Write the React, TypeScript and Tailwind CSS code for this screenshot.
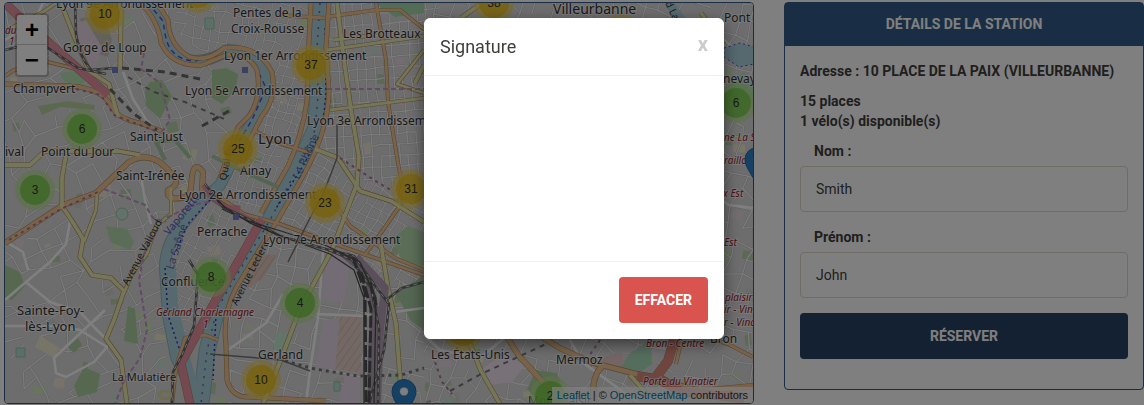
import React from "react";

type Point = [number, number];

function randomizer(seed: number) {
  let s = seed;
  return () => {
    s = (s * 16807) % 2147483647;
    return s / 2147483647;
  };
}

/* Builds an irregular network of small streets, rotated around its centre. */
function streets(cx: number, cy: number, w: number, h: number, cw: number, ch: number, angle: number, jitter: number, skip: number, seed: number) {
  const rnd = randomizer(seed);
  const cols = Math.ceil(w / cw);
  const rows = Math.ceil(h / ch);
  const a = (angle * Math.PI) / 180;
  const nodes: Point[][] = [];
  for (let r = 0; r <= rows; r++) {
    nodes.push([]);
    for (let c = 0; c <= cols; c++) {
      const x = -w / 2 + c * cw + (rnd() - 0.5) * jitter;
      const y = -h / 2 + r * ch + (rnd() - 0.5) * jitter;
      nodes[r].push([cx + x * Math.cos(a) - y * Math.sin(a), cy + x * Math.sin(a) + y * Math.cos(a)]);
    }
  }
  let d = "";
  const edge = (p: Point, q: Point) => {
    d += `M${p[0].toFixed(1)} ${p[1].toFixed(1)}L${q[0].toFixed(1)} ${q[1].toFixed(1)}`;
  };
  for (let r = 0; r <= rows; r++) {
    for (let c = 0; c <= cols; c++) {
      if (c < cols && rnd() > skip) edge(nodes[r][c], nodes[r][c + 1]);
      if (r < rows && rnd() > skip) edge(nodes[r][c], nodes[r + 1][c]);
    }
  }
  return d;
}

/* Scatters small land-use plots over the map. */
function plots(count: number, seed: number) {
  const rnd = randomizer(seed);
  const fills = ["#cdebb0", "#f0efc8", "#c6e3cf", "#f3e9d8", "#d4cfc8", "#eadbe6", "#add19e"];
  return Array.from({ length: count }, () => {
    const x = 5 + rnd() * 750;
    const y = 3 + rnd() * 400;
    const w = 4 + rnd() * 9;
    const h = 4 + rnd() * 8;
    const k = rnd() * 6 - 3;
    return {
      d: `M${x.toFixed(1)} ${y.toFixed(1)}l${w.toFixed(1)} ${k.toFixed(1)}l${(-k).toFixed(1)} ${h.toFixed(1)}l${(-w).toFixed(1)} ${(-k).toFixed(1)}z`,
      fill: fills[Math.floor(rnd() * fills.length)],
    };
  });
}

const districts = [
  { id: "west", area: "M5 3H140L170 62L222 66L256 70L250 120L205 190L165 240V404H5Z", d: streets(110, 210, 300, 460, 19, 17, -24, 13, 0.36, 71), w: 1.3 },
  { id: "north", area: "M158 3H310L306 100L262 70L240 50L195 56Z", d: streets(235, 50, 180, 150, 9, 10, 12, 4, 0.2, 15), w: 1.1 },
  { id: "center", area: "M270 75L308 100L300 145L262 215L205 195L250 140Z", d: streets(260, 150, 150, 160, 8, 9, 18, 3, 0.18, 33), w: 1.1 },
  { id: "east", area: "M330 3H440V200L345 175L322 150Z", d: streets(380, 95, 150, 230, 9, 11, -4, 2, 0.15, 44), w: 1.3 },
  { id: "south", area: "M322 150L345 175L440 200V300L270 230L285 200Z", d: streets(355, 215, 210, 170, 9, 10, 29, 3, 0.15, 92), w: 1.2 },
  { id: "confluence", area: "M200 200L262 225L185 355L172 320L172 260Z", d: streets(210, 260, 110, 170, 9, 10, 27, 3, 0.3, 12), w: 1.1 },
  { id: "gerland", area: "M268 235L424 290V404H228V310Z", d: streets(325, 320, 220, 210, 17, 15, 14, 8, 0.27, 6), w: 1.4 },
  { id: "suburbs", area: "M424 3H760V404H424Z", d: streets(590, 205, 420, 480, 15, 16, 20, 9, 0.24, 53), w: 1.3 },
];

const landUse = plots(210, 99);

const areas = [
  { fill: "#add19e", d: "M150 82L162 80L172 96L160 119L146 106L145 90Z" },
  { fill: "#add19e", d: "M212 70L226 68L238 74L236 90L222 104L212 98Z" },
  { fill: "#b5dcae", d: "M106 226L127 229L134 242L130 250L110 242Z" },
  { fill: "#add19e", d: "M128 306L135 309L138 344L124 341Z" },
  { fill: "#add19e", d: "M84 367L100 374L97 392L78 397L74 386Z" },
  { fill: "#add19e", d: "M5 265L20 272L25 286L12 300L5 298Z" },
  { fill: "#b8d3a0", d: "M38 106L68 101L95 105L94 110L60 107L42 115Z" },
  { fill: "#b7e2b5", d: "M60 73L74 71L86 79L81 88L64 81Z" },
  { fill: "#add19e", d: "M68 347L78 338L82 345L74 353Z" },
  { fill: "#eeead0", d: "M40 336L60 348L54 358L35 347Z" },
  { fill: "#c5c3b5", d: "M80 18L104 16L112 39L108 57L85 49Z" },
  { fill: "#ead9e7", d: "M68 26L86 20L102 48L95 67L80 59Z" },
  { fill: "#b5dcae", d: "M392 239L408 226L424 232V266L403 262Z" },
  { fill: "#a9cfa4", d: "M396 294L424 275V330L411 321Z" },
  { fill: "#a5d8ad", d: "M375 3H424V13L395 17Z" },
  { fill: "#e9d8ea", d: "M328 253L351 254L344 303L321 299Z" },
  { fill: "#e8d8e8", d: "M323 320L339 318L335 370L316 367Z" },
  { fill: "#e9d1cb", d: "M340 316H361V373L335 369Z" },
  { fill: "#e3cabd", d: "M255 254L277 255L263 278L247 289Z" },
  { fill: "#e9d8ea", d: "M345 375L360 377V404H339Z" },
  { fill: "#c5ead2", d: "M275 332L293 335L288 353L274 349Z" },
  { fill: "#a9dbbb", d: "M630 353L651 340L652 364L637 374L620 367Z" },
  { fill: "#add19e", d: "M536 370L557 373L566 400L541 403L527 389Z" },
  { fill: "#eac9ca", d: "M606 356L621 353L625 364L608 370L600 364Z" },
  { fill: "#f0e5f1", d: "M480 370L505 354L525 365L512 382L490 385Z" },
  { fill: "#b4e0bf", d: "M728 82L744 72L753 83V104L728 96Z" },
];

const roads = [
  { c: "#f0c795", w: 5, d: "M5 84L70 86Q102 88 112 107Q118 119 140 123L164 132" },
  { c: "#f0c795", w: 4, d: "M48 62L72 68L98 74M5 76L14 70L32 67" },
  { c: "#f0c795", w: 5, d: "M140 3Q158 19 161 43Q172 67 202 65L226 55Q248 52 257 70Q262 98 249 116L238 127L230 150L220 178" },
  { c: "#f0c795", w: 5, d: "M157 3L168 20Q169 46 190 57Q208 62 224 48Q258 44 272 72Q277 98 262 116L250 139L242 164" },
  { c: "#f0c795", w: 6, d: "M5 243L63 205L96 193L129 162Q151 149 170 172Q183 184 168 190Q165 203 190 196L192 177Q194 160 203 172L202 190L211 195" },
  { c: "#f0c795", w: 5, d: "M311 3L308 60L307 101Q302 136 288 166L261 213" },
  { c: "#f0c795", w: 5, d: "M329 3L326 48L329 91Q328 132 303 176L277 221L236 288Q222 315 226 345L227 380Q232 398 250 397L326 401" },
  { c: "#f0c795", w: 4, d: "M326 17L376 10H400L425 30" },
  { c: "#f0c795", w: 4, d: "M376 3L386 60L388 102L397 157L402 185L399 207L383 230L364 256" },
  { c: "#f0c795", w: 4, d: "M328 193L350 226L370 240L395 258L424 270M278 15L325 18M255 131L281 144L311 153" },
  { c: "#f0c795", w: 4, d: "M206 188L244 214L280 224L329 242L424 275M218 340L205 335L185 338L176 368L172 404" },
  { c: "#eaeab0", w: 5, d: "M5 165H30L45 151H75L118 151L140 155" },
  { c: "#eaeab0", w: 5, d: "M67 149L62 178V206Q75 225 83 239L80 257L92 275L111 278L124 291L114 320L106 339L121 360L127 404" },
  { c: "#eaeab0", w: 4, d: "M97 193L96 210L84 242M171 188V214L156 226L147 254L132 274L124 293M5 31L43 12L56 3" },
  { c: "#eaeab0", w: 5, d: "M61 3L74 36L89 71L109 84L118 117M121 10L120 69" },
  { c: "#eaeab0", w: 5, d: "M337 3L344 60L351 110L359 157L357 184L332 250L300 309L276 372L263 404" },
  { c: "#eaeab0", w: 4, d: "M327 50L425 36M330 110L425 98M333 40L375 35M424 50L397 84L424 93" },
  { c: "#eaeab0", w: 5, d: "M315 149L338 158L360 191L391 201L424 222M381 245L388 288L396 324L402 404" },
  { c: "#eaeab0", w: 5, d: "M464 329L481 371L500 404M415 83L424 65M482 3L461 18M630 375L646 393M701 13L724 45" },
  { c: "#f0c795", w: 6, d: "M502 329L519 356L544 383L562 404M537 334L560 348L590 362L640 375L700 391L753 386M604 365Q590 375 594 404" },
  { c: "#f0c795", w: 4, d: "M711 338L730 345L753 357M666 329L681 342L676 364" },
  { c: "#e892a2", w: 9, d: "M5 3L28 25L48 42L108 95M262 219L242 255L214 303L181 363L190 404" },
  { c: "#e892a2", w: 6, d: "M203 185L214 199L226 207L240 209M233 210L254 222" },
  { c: "#e18a80", w: 10, d: "M674 340L668 361L656 377M637 376L661 380L681 391L744 398" },
];

const rails = [
  "M75 3L76 34Q79 56 91 70L114 68",
  "M5 50L26 45L48 48L78 68L106 74",
  "M205 184L223 207L248 219L280 236L329 250L352 260L371 288L379 328L378 404",
  "M329 250L354 256L376 287L389 304L384 350L369 404",
  "M189 260L198 275L194 326L182 355L173 372L172 404",
  "M386 300L402 288L424 282L446 270",
];

const labels = [
  { x: 56, y: 8, s: 12, t: "Lyon 9e Arrondissement" },
  { x: 63, y: 52, s: 12, t: "Gorge de Loup" },
  { x: 13, y: 93, s: 12, t: "Champvert" },
  { x: 233, y: 17, s: 12, t: "Pentes de la" },
  { x: 231, y: 33, s: 12, t: "Croix-Rousse" },
  { x: 224, y: 60, s: 12, t: "Lyon 1er Arrondissement" },
  { x: 343, y: 38, s: 12, t: "Les Brotteaux" },
  { x: 185, y: 95, s: 12, t: "Lyon 5e Arrondissement" },
  { x: 307, y: 125, s: 12, t: "Lyon 3e Arrondissement" },
  { x: 130, y: 141, s: 12, t: "Saint-Just" },
  { x: 258, y: 144, s: 15, t: "Lyon" },
  { x: 5, y: 156, s: 12, t: "ival" },
  { x: 41, y: 156, s: 12, t: "Point du Jour" },
  { x: 116, y: 180, s: 12, t: "Saint-Irénée" },
  { x: 240, y: 175, s: 12, t: "Ainay" },
  { x: 179, y: 199, s: 12, t: "Lyon 2e Arrondissement" },
  { x: 197, y: 236, s: 12, t: "Perrache" },
  { x: 263, y: 244, s: 12, t: "Lyon 7e Arrondissement" },
  { x: 161, y: 286, s: 12, t: "Confluence" },
  { x: 17, y: 315, s: 13, t: "Sainte-Foy-" },
  { x: 25, y: 331, s: 13, t: "lès-Lyon" },
  { x: 112, y: 381, s: 11, t: "La Mulatière" },
  { x: 258, y: 359, s: 12, t: "Gerland" },
  { x: 553, y: 14, s: 14, t: "Villeurbanne" },
  { x: 724, y: 22, s: 12, t: "Pont" },
  { x: 723, y: 83, s: 12, t: "nevay" },
  { x: 431, y: 359, s: 12, t: "Les États-Unis" },
  { x: 556, y: 364, s: 12, t: "Mermoz" },
  { x: 710, y: 343, s: 12, t: "Bron" },
  { x: 528, y: 405, s: 12, t: "Montplaisir" },
];

const stops = [
  { x: 5, y: 34, t: "du" },
  { x: 9, y: 45, t: "1" },
  { x: 156, y: 316, t: "Gerland Charlemagne" },
  { x: 203, y: 328, t: "1" },
  { x: 724, y: 141, t: "ne La S" },
  { x: 724, y: 164, t: "raillo" },
  { x: 723, y: 197, t: "x Est" },
  { x: 724, y: 246, t: "Est" },
  { x: 725, y: 301, t: "plaisir" },
  { x: 724, y: 313, t: "ir - Vin" },
  { x: 724, y: 326, t: "r - Vinc" },
  { x: 646, y: 347, t: "Bron - Centre" },
  { x: 643, y: 385, t: "Porte du Vinatier" },
];

const clusters = [
  { x: 105, y: 14, n: 10 },
  { x: 198, y: -7, n: 12 },
  { x: 494, y: 3, n: 38 },
  { x: 621, y: 34, n: 14 },
  { x: 311, y: 65, n: 37 },
  { x: 82, y: 129, n: 6 },
  { x: 238, y: 149, n: 25 },
  { x: 35, y: 190, n: 3 },
  { x: 325, y: 203, n: 23 },
  { x: 411, y: 189, n: 31 },
  { x: 211, y: 277, n: 8 },
  { x: 300, y: 303, n: 4 },
  { x: 261, y: 380, n: 10 },
  { x: 463, y: 331, n: 21 },
  { x: 550, y: 396, n: 2 },
  { x: 736, y: 103, n: 6 },
];

function Pin({ x, y }: { x: number; y: number }) {
  return (
    <g transform={`translate(${x} ${y})`}>
      <path d="M0 41L20 24Q30 17 26 26L9 39Z" fill="#000" opacity=".2" />
      <path d="M0 40C-3 29 -12 21 -12 12.500A12 12 0 0 1 12 12.500C12 21 3 29 0 40Z" fill="#2b82cb" stroke="#2468a2" />
      <circle cy="12.500" r="4.500" fill="#fff" stroke="#2468a2" strokeWidth=".7" />
    </g>
  );
}

function CityMap() {
  return (
    <svg viewBox="5 3 748 400" preserveAspectRatio="xMidYMid slice" className="block size-full" role="img" aria-label="Carte de Lyon">
      <defs>
        {districts.map((z) => (
          <clipPath id={z.id} key={z.id}><path d={z.area} /></clipPath>
        ))}
        <pattern id="stripes" width="6" height="6" patternUnits="userSpaceOnUse" patternTransform="rotate(35)">
          <path d="M0 0V6" stroke="#c3a89d" />
        </pattern>
      </defs>
      <path d="M5 3H753V403H5Z" fill="#dcdbdb" />
      {landUse.map((p, i) => <path key={i} d={p.d} fill={p.fill} opacity=".8" />)}
      {districts.map((z) => (
        <g key={z.id} clipPath={`url(#${z.id})`} fill="none">
          <path d={z.d} stroke="#bdbdbd" strokeWidth={z.w + 0.9} />
          <path d={z.d} stroke="#f7f7f7" strokeWidth={z.w} />
        </g>
      ))}
      {areas.map((a) => <path key={a.d} d={a.d} fill={a.fill} />)}
      <path d="M340 316H361V373L335 369ZM255 254L277 255L263 278L247 289Z" fill="url(#stripes)" />
      <g fill="none" stroke="#fff" strokeWidth="2.500" strokeLinejoin="round">
        <path d="M5 300L26 282L50 262L66 244L70 222L63 209M26 282L50 302L80 312L95 328L106 339M5 326L55 326L80 330L107 347L94 362L66 377L56 373L54 358L105 310" />
        <path d="M123 72L133 99L147 121L160 132M141 176L145 200L151 224M43 3L35 20L5 40M28 270L23 252L8 243" />
        <path d="M324 240L318 318L310 370L306 404M228 350L266 323L283 294M316 314L364 316L424 308" />
        <path d="M424 335L440 350L480 358L508 335M570 340L582 362L640 404M712 30L736 50L753 56M704 188L729 205L753 208" />
      </g>

      <g fill="none" strokeLinejoin="round">
        <path d="M148 3L163 21L166 39Q172 60 195 61Q212 61 228 50Q255 51 265 74Q269 99 255 118L243 137L232 162L220 185L203 200L183 224Q165 243 165 268L168 315L176 357L190 385L196 404" stroke="#92b6b6" strokeWidth="12" />
        <path d="M148 3L163 21L166 39Q172 60 195 61Q212 61 228 50Q255 51 265 74Q269 99 255 118L243 137L232 162L220 185L203 200L183 224Q165 243 165 268L168 315L176 357L190 385L196 404" stroke="#aad3df" strokeWidth="10" />
        <path d="M320 3L317 48L318 96L315 130L296 171L270 220L241 268L217 309L207 351L201 404" stroke="#90bac5" strokeWidth="17" />
        <path d="M320 3L317 48L318 96L315 130L296 171L270 220L241 268L217 309L207 351L201 404" stroke="#aad3df" strokeWidth="15" />
        <path d="M169 267L171 306L184 362L196 404" stroke="#aad3df" strokeWidth="14" />
        <path d="M148 3L163 21L166 39Q172 60 195 61L222 55M255 65L266 88L252 120L239 141" stroke="#5354dd" strokeWidth="1.500" strokeDasharray="5 4" />
        <path d="M320 3L317 48L318 96L315 130L296 171L270 220L241 268L217 309L207 351L201 404" stroke="#6764b7" strokeWidth="1.500" strokeDasharray="2 6" />
        <path d="M210 200L188 224L174 255M165 268L168 315L183 360M325 28L326 94L322 130L303 166L275 210M216 314L213 380" stroke="#3431c8" strokeWidth="1.500" strokeDasharray="2 3" />
        <path d="M724 48L740 43L754 47V64L739 67L724 57Z" fill="#aad3df" stroke="#4d49d2" strokeDasharray="2 3" />
        <path d="M669 3L682 21" stroke="#aad3df" strokeWidth="9" />
      </g>

      <g fill="none" strokeLinejoin="round">
        {roads.map((r) => <path key={r.d} d={r.d} stroke="#b08c5e" strokeWidth={r.w} />)}
        {roads.map((r) => <path key={r.d} d={r.d} stroke={r.c} strokeWidth={r.w - 1.2} />)}
        <path d="M345 255L368 274L375 310L372 350V404M356 257L385 288L380 330L377 404" stroke="#b5a1b6" strokeWidth="8" />
        {rails.map((d) => <path key={d} d={d} stroke="#676767" strokeWidth="2.600" />)}
        {rails.map((d) => <path key={d} d={d} stroke="#d9d9d9" strokeWidth="1" strokeDasharray="4 4" />)}
        <path d="M209 193L227 209L250 223L281 236L330 254L354 270L364 298V404M222 209L248 221L281 231L327 246L360 262L376 298L374 404" stroke="#4c4c4c" strokeWidth="1.300" />
        <path d="M337 124V158L324 192L310 218L288 262M210 354L246 357L281 360L310 371" stroke="#777" strokeWidth="1.500" />
        <path d="M353 257L365 292L366 404M361 272L371 309L369 404M370 282L376 305" stroke="#505050" strokeWidth="3" strokeDasharray="12 3" />
        <path d="M122 68L165 72L200 79M110 89L134 114L157 130M202 126L229 111" stroke="#686868" strokeWidth="3" strokeDasharray="7 5" />
        <path d="M128 77L154 92L185 102L224 119M450 391L481 374L518 357L548 343" stroke="#777" strokeWidth="2" strokeDasharray="5 5" />
        <path d="M285 361L315 369L358 376L401 375L424 368" stroke="#777" strokeWidth="3" strokeDasharray="3 4" />
        <path d="M104 189L145 205L153 218L166 222M157 230L144 254L139 280L147 330L140 358L124 381L115 404M144 53L141 69L160 83L170 120L158 137M327 89H424M205 190L217 200L193 205L166 218" stroke="#c595c9" strokeWidth="2" strokeDasharray="5 3" />
        <path d="M76 89L101 95L114 115L158 132M9 240L61 209L100 191M340 158L374 180L391 190M435 362L442 382L452 394M600 340L589 356" stroke="#b66f9f" strokeWidth="2" strokeDasharray="3 4" />
        <path d="M212 156L240 170L278 187M165 160L156 142L175 140L190 158" stroke="#a9c9a7" strokeWidth="4" />
      </g>
      <g fill="#7581c0">
        <path d="M112 67h6v6h-6zM242 67h6v6h-6zM233 214h6v6h-6z" />
      </g>
      <g fill="none" stroke="#91c6b0">
        <circle cx="122" cy="214" r="6" fill="#c5e5d7" />
        <ellipse cx="165" cy="395" rx="6" ry="4" stroke="#dada9b" strokeWidth="3" />
        <path d="M205 18h9v11h-9zM16 348h9v9h-9zM334 382h6v9h-6z" fill="#b9dfcf" />
      </g>

      <g fontFamily="'Noto Sans', sans-serif" fontSize="10" fill="#333">
        <text transform="translate(128 286) rotate(-62)">Avenue Valioud</text>
        <text transform="translate(237 306) rotate(-63)">Avenue Leclerc</text>
        <text transform="translate(226 181) rotate(-78)">Quai Fu</text>
        <text transform="translate(169 236) rotate(-51)" fill="#5960c4" fontSize="11">Vaporetto</text>
        <text transform="translate(173 270) rotate(-72)" fill="#5371b3" fontSize="11">La Saône</text>
        <text transform="translate(299 180) rotate(-65)" fill="#5371b3" fontSize="11">Le Rhône</text>
        <text transform="translate(665 3) rotate(65)">d Laurent</text>
      </g>
      <g fontFamily="'Noto Sans', sans-serif" fill="#333" stroke="#fff" strokeOpacity=".6" strokeWidth="2" paintOrder="stroke" strokeLinejoin="round">
        {labels.map((l) => <text key={l.t} x={l.x} y={l.y} fontSize={l.s}>{l.t}</text>)}
      </g>
      <g fontFamily="'Noto Sans', sans-serif" fontStyle="italic" fontSize="10" fill="#9e1c2c" stroke="#fff" strokeOpacity=".6" strokeWidth="2" paintOrder="stroke">
        {stops.map((l) => <text key={l.t + l.y} x={l.x} y={l.y}>{l.t}</text>)}
      </g>
      <g fontFamily="'Liberation Sans', sans-serif" fontSize="12" textAnchor="middle" fill="#333">
        {clusters.map((c) => (
          <g key={`${c.x}-${c.y}`}>
            <circle cx={c.x} cy={c.y} r="20" fill={c.n < 10 ? "#b5e28c" : "#f1d357"} opacity=".6" />
            <circle cx={c.x} cy={c.y} r="15" fill={c.n < 10 ? "#6ecc39" : "#f0c20c"} opacity=".7" />
            <text x={c.x} y={c.y + 4}>{c.n}</text>
          </g>
        ))}
      </g>
      <Pin x={404} y={379} />
      <Pin x={757} y={147} />
    </svg>
  );
}

function Field({ id, label, value }: { id: string; label: string; value: string }) {
  return (
    <div className="mb-[15px]">
      <label htmlFor={id} className="mb-[5px] block px-3.5 font-bold">{label}</label>
      <input id={id} type="text" defaultValue={value} className="block h-[46px] w-full rounded border border-[#dfd7ca] bg-white px-[15px] text-sm text-[#3e3f3a]" />
    </div>
  );
}

export default function App() {
  return (
    <div className="min-h-screen bg-white font-['Roboto',sans-serif] text-sm leading-5 text-[#3e3f3a]">
      <main className="grid grid-cols-[25fr_12fr] items-start gap-[30px] pt-0.5 pl-1">
        <section className="relative h-[402px] overflow-hidden rounded border border-[#325d88]">
          <CityMap />
          <div className="absolute top-2.5 left-2.5 flex flex-col overflow-hidden rounded border-2 border-black/20 bg-white bg-clip-padding font-['Liberation_Mono',monospace] text-2xl leading-none font-bold text-black">
            <button type="button" aria-label="Zoom avant" className="h-[30px] w-[30px] border-b border-[#ccc] pt-1">+</button>
            <button type="button" aria-label="Zoom arrière" className="h-[30px] w-[30px] pt-1">−</button>
          </div>
          <div className="absolute right-0 bottom-0 bg-white/70 px-[5px] font-['Liberation_Sans',sans-serif] text-[11px] leading-4 text-[#333]">
            <a href="#leaflet" className="text-[#0078a8]">Leaflet</a> | © <a href="#openstreetmap" className="text-[#0078a8]">OpenStreetMap</a> contributors
          </div>
        </section>

        <section className="rounded border border-[#325d88] bg-white">
          <h2 className="border-b border-[#325d88] bg-[#325d88] px-4 py-[11px] text-center font-bold text-white">DÉTAILS DE LA STATION</h2>
          <div className="p-[15px] font-bold">
            <p className="mb-2.5">Adresse : 10 PLACE DE LA PAIX (VILLEURBANNE)</p>
            <p className="mb-2.5">15 places<br />1 vélo(s) disponible(s)</p>
            <form onSubmit={(e) => e.preventDefault()} className="font-normal">
              <Field id="nom" label="Nom :" value="Smith" />
              <Field id="prenom" label="Prénom :" value="John" />
              <button type="submit" className="mb-[15px] h-[46px] w-full rounded bg-[#264264] font-bold text-white">RÉSERVER</button>
            </form>
          </div>
        </section>
      </main>

      <div className="fixed inset-0 flex items-start justify-center overflow-hidden bg-black/50 pt-[18px] pl-1">
        <div role="dialog" aria-modal="true" aria-labelledby="signature-title" className="w-[300px] rounded-md border border-white bg-white shadow-[0_5px_15px_rgba(0,0,0,0.5)]">
          <header className="flex items-start justify-between border-b border-[#f0f0f0] p-[15px]">
            <h3 id="signature-title" className="text-lg leading-[26px]">Signature</h3>
            <button type="button" aria-label="Fermer" className="text-xl leading-5 font-bold text-[#ccc]">x</button>
          </header>
          <div className="p-4">
            <canvas aria-label="Zone de signature" className="block h-[153px] w-full" />
          </div>
          <footer className="flex justify-end border-t border-[#f0f0f0] p-[15px]">
            <button type="button" className="h-[46px] rounded bg-[#d9534f] px-4 font-bold text-white">EFFACER</button>
          </footer>
        </div>
      </div>
    </div>
  );
}
